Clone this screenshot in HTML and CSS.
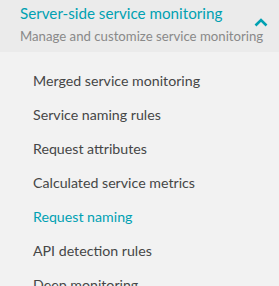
FILE: index.html
```html
<!DOCTYPE html>
<html lang="en">
<head>
  <meta charset="UTF-8">
  <meta name="viewport" content="width=device-width, initial-scale=1">
  <title>Settings</title>
  <link rel="stylesheet" href="styles.css">
</head>
<body>

  <div class="grupo">
    <div class="grupo-cabecera">
      <div class="grupo-textos">
        <div class="grupo-titulo">Server-side service monitoring</div>
        <div class="grupo-sub">Manage and customize service monitoring</div>
      </div>
      <svg class="flecha" width="14" height="9" viewBox="0 0 14 9">
        <path d="M1.5 7.5 L7 2 L12.5 7.5" fill="none" stroke="#00a1b2" stroke-width="2.6"/>
      </svg>
    </div>

    <ul class="menu">
      <li>Merged service monitoring</li>
      <li>Service naming rules</li>
      <li>Request attributes</li>
      <li>Calculated service metrics</li>
      <li class="activo">Request naming</li>
      <li>API detection rules</li>
      <li>Deep monitoring</li>
    </ul>
  </div>

</body>
</html>
```

FILE: styles.css
```css
body {
  margin: 0;
  font-family: 'Lato', sans-serif;
  background: #f2f2f2;
  color: #454646;
}

.grupo-cabecera {
  display: flex;
  align-items: center;
  background: #ebebeb;
  height: 52px;
  padding: 0 11px 0 20px;
  overflow: hidden;
}

.grupo-textos {
  flex: 1;
  min-width: 0;
  white-space: nowrap;
}

.grupo-titulo {
  color: #00a1b2;
  font-size: 15.2px;
  line-height: 22px;
  margin-top: -6px;
}

.grupo-sub {
  color: #898989;
  font-size: 13.2px;
  line-height: 18px;
  margin-top: 3px;
}

.flecha {
  align-self: flex-start;
  margin-top: 18px;
  flex-shrink: 0;
}

.menu {
  list-style: none;
  margin: 0;
  padding: 12px 0 0 33px;
}

.menu li {
  font-size: 14.2px;
  line-height: 34px;
  white-space: nowrap;
}

.menu li.activo {
  color: #00a1b2;
}
```
